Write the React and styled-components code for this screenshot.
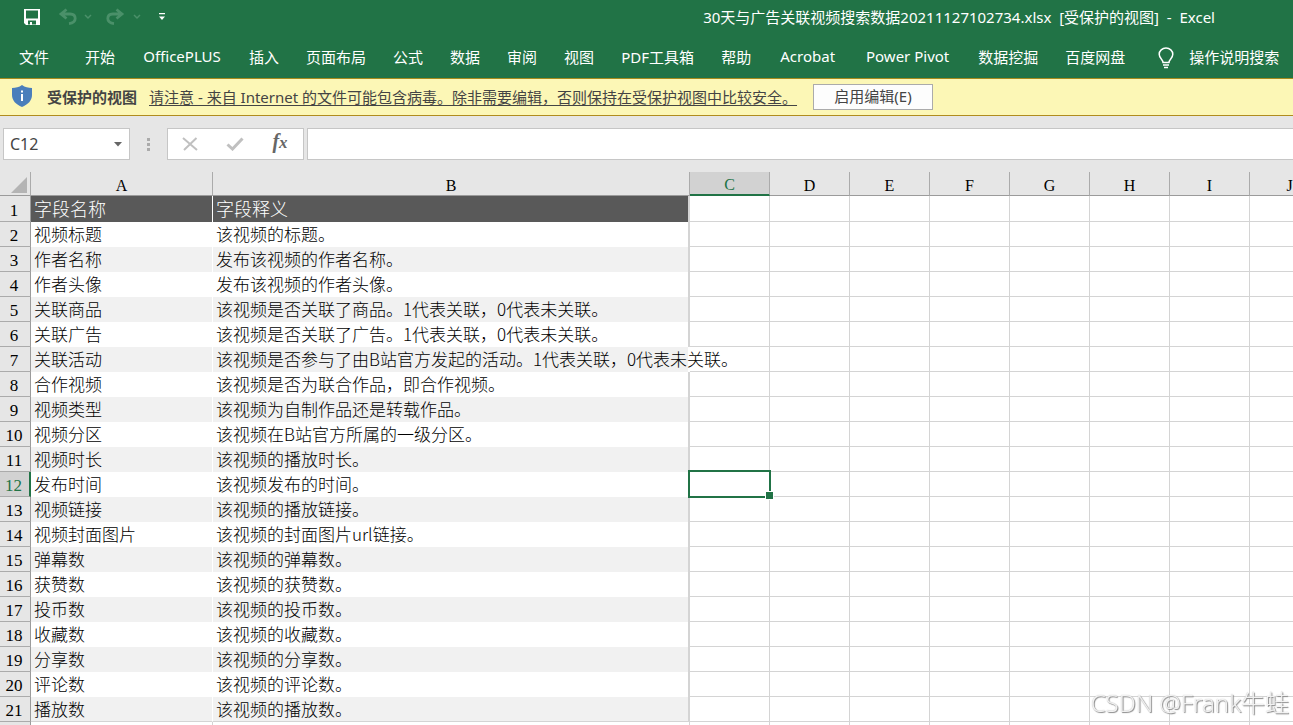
import { useState } from 'react';
import styled, { createGlobalStyle } from 'styled-components';

const GlobalStyle = createGlobalStyle`
  * {
    box-sizing: border-box;
  }

  body {
    margin: 0;
    overflow: hidden;
    background: #e6e6e6;
    font-family: 'Noto Sans', 'Noto Sans CJK SC', sans-serif;
    font-size: 15px;
  }

  button,
  input {
    margin: 0;
    padding: 0;
    border: 0;
    background: none;
    color: inherit;
    font: inherit;
  }
`;

const Window = styled.div`
  display: flex;
  flex-direction: column;
  height: 100vh;
  overflow: hidden;
`;

const TitleBar = styled.header`
  display: flex;
  flex: none;
  align-items: center;
  justify-content: space-between;
  height: 36px;
  padding: 0 78px 2px 23px;
  background: #217346;
  color: #fff;
`;

const QuickAccess = styled.div`
  display: flex;
  align-items: center;
`;

const IconButton = styled.button`
  display: flex;
  align-items: center;
  justify-content: center;
  width: ${({ $width }) => $width}px;
  height: 30px;
  margin-left: ${({ $gap }) => $gap || 0}px;
  color: ${({ $color }) => $color || '#fff'};

  svg {
    flex: none;
  }
`;

const Title = styled.h1`
  margin: 0;
  font-size: 15px;
  font-weight: 400;
  line-height: 34px;
  white-space: pre;
`;

const Ribbon = styled.nav`
  display: flex;
  flex: none;
  gap: 27px;
  height: 42px;
  padding-left: 19px;
  background: #217346;
  color: #fff;
`;

const Tab = styled.button`
  display: flex;
  flex: none;
  align-items: center;
  justify-content: center;
  gap: 15px;
  height: 40px;
  min-width: ${({ $width }) => $width || 30}px;
  margin-right: ${({ $gap }) => $gap || 0}px;
  white-space: nowrap;

  svg {
    margin-top: 4px;
  }
`;

const MessageBar = styled.section`
  display: flex;
  flex: none;
  align-items: center;
  height: 38px;
  padding: 0 0 2px 12px;
  border-top: 1px solid #a58a1c;
  border-bottom: 1px solid #b08c1e;
  background: #fcf7b6;
  color: #444;
  white-space: nowrap;

  svg {
    flex: none;
  }

  strong {
    margin: 0 12px 0 15px;
  }

  a {
    color: inherit;
    text-decoration-skip-ink: none;
    text-underline-offset: 2px;
  }
`;

const EnableButton = styled.button`
  width: 120px;
  height: 26px;
  margin: 2px 0 0 16px;
  padding-bottom: 2px;
  border: 1px solid #ababab;
  background: #fdfdfd;
  line-height: 22px;
`;

const FormulaBar = styled.section`
  display: flex;
  flex: none;
  height: 56px;
  padding: 12px 0 12px 3px;
  color: #444;
`;

const NameBox = styled.div`
  display: flex;
  width: 127px;
  border: 1px solid #c6c6c6;
  background: #fff;

  input {
    flex: 1;
    min-width: 0;
    padding-left: 6px;
    font-size: 16px;
  }
`;

const Grip = styled.div`
  display: flex;
  flex-direction: column;
  align-items: center;
  justify-content: center;
  gap: 2px;
  width: 37px;

  i {
    width: 3px;
    height: 3px;
    background: #ababab;
  }
`;

const FormulaActions = styled.div`
  display: flex;
  align-items: center;
  width: 137px;
  margin-right: 3px;
  border: 1px solid #c6c6c6;
  background: #fff;
`;

const FormulaInput = styled.input`
  flex: 1;
  padding: 0 6px;
  border: 1px solid #c6c6c6;
  border-right: 0;
  background: #fff;
`;

const SheetArea = styled.main`
  flex: 1;
  min-height: 0;
  overflow: hidden;
`;

const Sheet = styled.table`
  width: 1330px;
  table-layout: fixed;
  border-collapse: separate;
  border-spacing: 0;
  background: #fff;
  font-family: 'Noto Sans CJK SC', sans-serif;
  font-size: 17px;
  font-weight: 300;
  color: #000;
`;

const Col = styled.col`
  width: ${({ $width }) => $width}px;
`;

const Corner = styled.td`
  height: 24px;
  padding: 2px 3px 0 0;
  border-right: 1px solid #ababab;
  border-bottom: 1px solid #9b9b9b;
  background: #e6e6e6;

  svg {
    display: block;
    margin-left: auto;
  }
`;

const ColumnHead = styled.th`
  height: 24px;
  padding: 4px 0 0;
  border-right: 1px solid #ababab;
  border-bottom: ${({ $active }) => ($active ? '2px solid #217346' : '1px solid #9b9b9b')};
  background: ${({ $active }) => ($active ? '#d2d2d2' : '#e6e6e6')};
  color: ${({ $active }) => ($active ? '#217346' : '#000')};
  font: 400 16px/18px 'Liberation Serif', serif;
`;

const RowHead = styled.th`
  padding: 4px 2px 0 0;
  border-right: ${({ $active }) => ($active ? '2px solid #217346' : '1px solid #9b9b9b')};
  border-bottom: 1px solid #ababab;
  background: ${({ $active }) => ($active ? '#d2d2d2' : '#e6e6e6')};
  color: ${({ $active }) => ($active ? '#217346' : '#000')};
  font: 400 17px/20px 'Liberation Serif', serif;
`;

const Row = styled.tr`
  height: ${({ $tall }) => ($tall ? 26 : 25)}px;
`;

const Cell = styled.td`
  padding: 0;
  border-right: 1px solid #d4d4d4;
  border-bottom: 1px solid #d4d4d4;
`;

const fills = { head: '#595959', odd: '#f1f1f1', even: '#fff' };

const DataCell = styled.td`
  padding: 0 0 0 3px;
  border-right: ${({ $end, $spill }) => ($end ? `2px solid ${$spill ? '#fff' : '#d4d4d4'}` : '1px solid #fff')};
  border-bottom: ${({ $last }) => ($last ? '1px solid #d4d4d4' : '0')};
  background: ${({ $fill }) => fills[$fill]};
  background-clip: padding-box;
  color: ${({ $fill }) => ($fill === 'head' ? '#fff' : '#000')};
  font-size: ${({ $fill }) => ($fill === 'head' ? 18 : 17)}px;
  line-height: 24px;
  vertical-align: top;
  white-space: nowrap;
`;

const SelectedCell = styled(Cell)`
  position: relative;
`;

const Selection = styled.div`
  position: absolute;
  inset: -2px;
  border: 2px solid #217346;

  &::after {
    content: '';
    position: absolute;
    right: -5px;
    bottom: -4px;
    width: 7px;
    height: 7px;
    border: 1px solid #fff;
    background: #217346;
  }
`;

const Watermark = styled.div`
  position: fixed;
  right: 4px;
  bottom: 4px;
  color: rgba(255, 255, 255, 0.85);
  font-size: 24px;
  font-weight: 300;
  line-height: 36px;
  text-shadow: 1px 1px 1px #888, 0 0 1px #aaa;
  white-space: nowrap;
  pointer-events: none;
`;

const tabs = [
  { label: '文件', gap: 9 },
  { label: '开始' },
  { label: 'OfficePLUS', width: 80 },
  { label: '插入' },
  { label: '页面布局' },
  { label: '公式' },
  { label: '数据' },
  { label: '审阅' },
  { label: '视图' },
  { label: 'PDF工具箱', width: 73 },
  { label: '帮助' },
  { label: 'Acrobat', width: 59 },
  { label: 'Power Pivot', width: 87 },
  { label: '数据挖掘' },
  { label: '百度网盘', gap: 6 },
];

const fields = [
  ['字段名称', '字段释义'],
  ['视频标题', '该视频的标题。'],
  ['作者名称', '发布该视频的作者名称。'],
  ['作者头像', '发布该视频的作者头像。'],
  ['关联商品', '该视频是否关联了商品。1代表关联，0代表未关联。'],
  ['关联广告', '该视频是否关联了广告。1代表关联，0代表未关联。'],
  ['关联活动', '该视频是否参与了由B站官方发起的活动。1代表关联，0代表未关联。'],
  ['合作视频', '该视频是否为联合作品，即合作视频。'],
  ['视频类型', '该视频为自制作品还是转载作品。'],
  ['视频分区', '该视频在B站官方所属的一级分区。'],
  ['视频时长', '该视频的播放时长。'],
  ['发布时间', '该视频发布的时间。'],
  ['视频链接', '该视频的播放链接。'],
  ['视频封面图片', '该视频的封面图片url链接。'],
  ['弹幕数', '该视频的弹幕数。'],
  ['获赞数', '该视频的获赞数。'],
  ['投币数', '该视频的投币数。'],
  ['收藏数', '该视频的收藏数。'],
  ['分享数', '该视频的分享数。'],
  ['评论数', '该视频的评论数。'],
  ['播放数', '该视频的播放数。'],
];

const columns = ['A', 'B', 'C', 'D', 'E', 'F', 'G', 'H', 'I', 'J'];
const emptyColumns = columns.slice(2);
const SELECTED_ROW = 12;

const SaveIcon = () => (
  <svg width="18" height="18" viewBox="0 0 18 18" fill="currentColor">
    <path fillRule="evenodd" d="M1 1h16v16H3l-2-2zM3 2.500v8h12v-8zM5 12.500v4h2v-2.500h2v2.500h4v-4z" />
  </svg>
);

const UndoIcon = ({ flip }) => (
  <svg width="20" height="18" viewBox="0 0 20 18" fill="none" stroke="currentColor" strokeWidth="2.8">
    <g transform={flip ? 'matrix(-1 0 0 1 20 0)' : undefined}>
      <path d="M8.500 1.500 3 6l5.500 4.500M3 6h9.200c3 0 5 1.800 5 4.600s-2.200 4.500-6.200 5" />
    </g>
  </svg>
);

const ChevronIcon = () => (
  <svg width="8" height="6" viewBox="0 0 8 6" fill="none" stroke="currentColor" strokeWidth="1.5">
    <path d="m1 1 3 3 3-3" />
  </svg>
);

const CustomizeIcon = () => (
  <svg width="6" height="8" viewBox="0 0 6 8" fill="currentColor">
    <path d="M0 0h6v1.300H0zM0 3.500h6L3 7z" />
  </svg>
);

const BulbIcon = () => (
  <svg width="16" height="22" viewBox="0 0 16 22" fill="none" stroke="currentColor" strokeWidth="1.5">
    <path d="M5 15.500c0-3-3.800-4.200-3.800-8.200a6.800 6.300 0 0 1 13.600 0c0 4-3.800 5.200-3.800 8.200zM5 18h6M6 20.500h4" />
  </svg>
);

const ShieldIcon = () => (
  <svg width="20" height="22" viewBox="0 0 20 22">
    <path fill="#4a7ebb" d="M10 0c3 2.300 6.300 3 10 3v7c0 5.500-4 9.500-10 12C4 19.500 0 15.500 0 10V3c3.700 0 7-.7 10-3z" />
    <path fill="#fff" d="M9 5.500h2v2H9zM9 9h2v7H9z" />
  </svg>
);

const ArrowIcon = () => (
  <svg width="8" height="5" viewBox="0 0 8 5" fill="#666">
    <path d="M0 0h8L4 4.500z" />
  </svg>
);

const CancelIcon = () => (
  <svg width="16" height="14" viewBox="0 0 16 14" fill="none" stroke="currentColor" strokeWidth="2">
    <path d="m1 1 14 12M14.500 1 2 13" />
  </svg>
);

const CheckIcon = () => (
  <svg width="18" height="14" viewBox="0 0 18 14" fill="none" stroke="currentColor" strokeWidth="3">
    <path d="m1.500 7.500 5 4.500L16.500 1.500" />
  </svg>
);

const FunctionLabel = styled.span`
  padding-bottom: 4px;
  font: italic 700 20px/22px 'Liberation Serif', serif;

  small {
    font-size: 17px;
  }
`;

const App = () => {
  const [name, setName] = useState('C12');
  const [formula, setFormula] = useState('');

  return (
    <Window>
      <GlobalStyle />
      <TitleBar>
        <QuickAccess>
          <IconButton $width={18} aria-label="保存"><SaveIcon /></IconButton>
          <IconButton $width={20} $gap={17} $color="#4a9069" aria-label="撤消"><UndoIcon /></IconButton>
          <IconButton $width={8} $gap={6} $color="#4a9069" aria-label="撤消列表"><ChevronIcon /></IconButton>
          <IconButton $width={20} $gap={13} $color="#4a9069" aria-label="恢复"><UndoIcon flip /></IconButton>
          <IconButton $width={8} $gap={8} $color="#4a9069" aria-label="恢复列表"><ChevronIcon /></IconButton>
          <IconButton $width={6} $gap={18} aria-label="自定义快速访问工具栏"><CustomizeIcon /></IconButton>
        </QuickAccess>
        <Title>{'30天与广告关联视频搜索数据20211127102734.xlsx  [受保护的视图]  -  Excel'}</Title>
      </TitleBar>
      <Ribbon>
        {tabs.map(({ label, gap, width }) => (
          <Tab key={label} $gap={gap} $width={width}>{label}</Tab>
        ))}
        <Tab><BulbIcon />操作说明搜索</Tab>
      </Ribbon>
      <MessageBar>
        <ShieldIcon />
        <strong>受保护的视图</strong>
        <a href="#protected">请注意 - 来自 Internet 的文件可能包含病毒。除非需要编辑，否则保持在受保护视图中比较安全。</a>
        <EnableButton>启用编辑(E)</EnableButton>
      </MessageBar>
      <FormulaBar>
        <NameBox>
          <input aria-label="名称框" value={name} onChange={(e) => setName(e.target.value)} />
          <IconButton $width={22} aria-label="名称列表"><ArrowIcon /></IconButton>
        </NameBox>
        <Grip><i /><i /><i /></Grip>
        <FormulaActions>
          <IconButton $width={44} $color="#c0c0c0" aria-label="取消"><CancelIcon /></IconButton>
          <IconButton $width={46} $color="#c0c0c0" aria-label="输入"><CheckIcon /></IconButton>
          <IconButton $width={44} $color="#666" aria-label="插入函数">
            <FunctionLabel>f<small>x</small></FunctionLabel>
          </IconButton>
        </FormulaActions>
        <FormulaInput aria-label="编辑栏" value={formula} onChange={(e) => setFormula(e.target.value)} />
      </FormulaBar>
      <SheetArea>
        <Sheet>
          <colgroup>
            <Col $width={31} />
            <Col $width={182} />
            <Col $width={477} />
            {emptyColumns.map((column) => <Col key={column} $width={80} />)}
          </colgroup>
          <thead>
            <tr>
              <Corner>
                <svg width="16" height="16" viewBox="0 0 16 16"><path fill="#b4b4b4" d="M16 0v16H0z" /></svg>
              </Corner>
              {columns.map((column) => (
                <ColumnHead key={column} scope="col" $active={column === 'C'}>{column}</ColumnHead>
              ))}
            </tr>
          </thead>
          <tbody>
            {fields.map(([field, meaning], index) => {
              const row = index + 1;
              const fill = index === 0 ? 'head' : row % 2 ? 'odd' : 'even';
              const last = row === fields.length;
              return (
                <Row key={row} $tall={index === 0}>
                  <RowHead scope="row" $active={row === SELECTED_ROW}>{row}</RowHead>
                  <DataCell $fill={fill} $last={last}>{field}</DataCell>
                  <DataCell $fill={fill} $last={last} $end $spill={row === 7}>{meaning}</DataCell>
                  {emptyColumns.map((column) => (
                    row === SELECTED_ROW && column === 'C'
                      ? <SelectedCell key={column}><Selection /></SelectedCell>
                      : <Cell key={column} />
                  ))}
                </Row>
              );
            })}
            <Row>
              <RowHead scope="row" aria-label="22" />
              {columns.map((column) => <Cell key={column} />)}
            </Row>
          </tbody>
        </Sheet>
      </SheetArea>
      <Watermark>CSDN @Frank牛蛙</Watermark>
    </Window>
  );
};

export default App;
